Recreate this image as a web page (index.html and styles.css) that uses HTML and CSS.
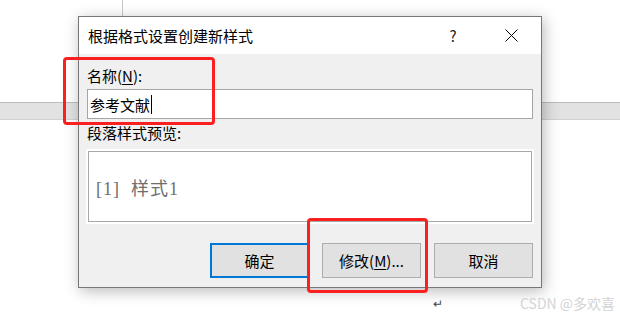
FILE: index.html
```html
<!DOCTYPE html>
<html lang="zh-CN">
<head>
  <meta charset="UTF-8">
  <title>根据格式设置创建新样式</title>
  <link rel="stylesheet" href="styles.css">
</head>
<body>

  <!-- 文档背景 -->
  <div class="doc-line"></div>
  <div class="doc-band"></div>

  <!-- 对话框 -->
  <div class="dialog">
    <div class="titlebar">
      <span class="title">根据格式设置创建新样式</span>
      <span class="help">?</span>
      <span class="close">
        <svg width="13" height="13" viewBox="0 0 13 13">
          <path d="M0.5 0.5 L12.5 12.5 M12.5 0.5 L0.5 12.5" stroke="#000" stroke-width="1" fill="none"/>
        </svg>
      </span>
    </div>

    <div class="content">
      <label class="label name-label">名称(<u>N</u>):</label>
      <div class="field">参考文献<span class="caret"></span></div>

      <label class="label">段落样式预览:</label>
      <div class="preview">
        <div class="preview-inner">[1]&nbsp; 样式1</div>
      </div>

      <div class="buttons">
        <button class="btn default">确定</button>
        <button class="btn">修改(<u>M</u>)...</button>
        <button class="btn">取消</button>
      </div>
    </div>
  </div>

  <!-- 红框标注 -->
  <div class="mark mark-name"></div>
  <div class="mark mark-modify"></div>

  <span class="para">↵</span>
  <span class="watermark">CSDN @多欢喜</span>

</body>
</html>
```

FILE: styles.css
```css
body {
  margin: 0;
  width: 620px;
  height: 312px;
  position: relative;
  overflow: hidden;
  background-color: #fff;
  font-family: "Noto Sans CJK SC", "Noto Sans", sans-serif;
  font-size: 15px;
  color: #000;
}
.doc-line {
  position: absolute;
  left: 122px;
  top: 0;
  width: 1px;
  height: 16px;
  background-color: #c8c8c8;
}
.doc-band {
  position: absolute;
  left: 0;
  top: 102px;
  width: 620px;
  height: 16px;
  background-color: #e2e2e2;
  border-top: 1px solid #bdbdbd;
  border-bottom: 1px solid #d2d2d2;
}
.dialog {
  position: absolute;
  left: 78px;
  top: 16px;
  width: 464px;
  height: 272px;
  box-sizing: border-box;
  border: 1px solid #777;
  background-color: #f0f0f0;
  box-shadow: 2px 3px 14px rgba(0, 0, 0, 0.28);
  display: flex;
  flex-direction: column;
}
.titlebar {
  height: 37px;
  background-color: #fff;
  display: flex;
  align-items: center;
  padding-left: 9px;
}
.title {
  flex: 1;
  line-height: 20px;
}
.help {
  width: 14px;
  text-align: center;
  margin-right: 45px;
  color: #222;
}
.close {
  display: flex;
  margin-right: 23px;
}
.content {
  padding: 12px 8px 0 8px;
}
.label {
  display: block;
  line-height: 20px;
}
.label u {
  text-underline-offset: 2px;
}
.field {
  margin-top: 3px;
  height: 30px;
  box-sizing: border-box;
  border: 1px solid #a5a5a5;
  background-color: #fff;
  padding-left: 2px;
  line-height: 27px;
  display: flex;
  align-items: center;
}
.caret {
  display: inline-block;
  width: 1px;
  height: 19px;
  background-color: #000;
  margin-left: 1px;
}
.field + .label {
  margin-top: 4px;
}
.preview {
  margin: 6px -1px 0 -1px;
  padding: 2px;
  background-color: #fff;
  height: 75px;
  box-sizing: border-box;
}
.preview-inner {
  height: 100%;
  box-sizing: border-box;
  border: 1px solid #a8a8a8;
  padding-left: 7px;
  display: flex;
  align-items: center;
  font-family: "Liberation Serif", "Noto Sans CJK SC", serif;
  font-size: 18px;
  color: #6e6e6e;
  letter-spacing: 1px;
}
.buttons {
  margin-top: 19px;
  display: flex;
  justify-content: flex-end;
  gap: 13px;
}
.btn {
  width: 99px;
  height: 35px;
  box-sizing: border-box;
  border: 1px solid #adadad;
  background-color: #e1e1e1;
  font-family: inherit;
  font-size: 15px;
  color: #000;
  padding: 0;
}
.btn.default {
  border: 2px solid #0078d7;
}
.btn u {
  text-underline-offset: 2px;
}
.mark {
  position: absolute;
  box-sizing: border-box;
  border: 3px solid #fa2020;
  border-radius: 4px;
}
.mark-name {
  left: 63px;
  top: 57px;
  width: 152px;
  height: 68px;
}
.mark-modify {
  left: 307px;
  top: 218px;
  width: 121px;
  height: 75px;
}
.para {
  position: absolute;
  left: 433px;
  top: 294px;
  font-size: 12px;
  color: #444;
}
.watermark {
  position: absolute;
  left: 520px;
  top: 293px;
  font-size: 14px;
  color: #d4d4d4;
}
```
